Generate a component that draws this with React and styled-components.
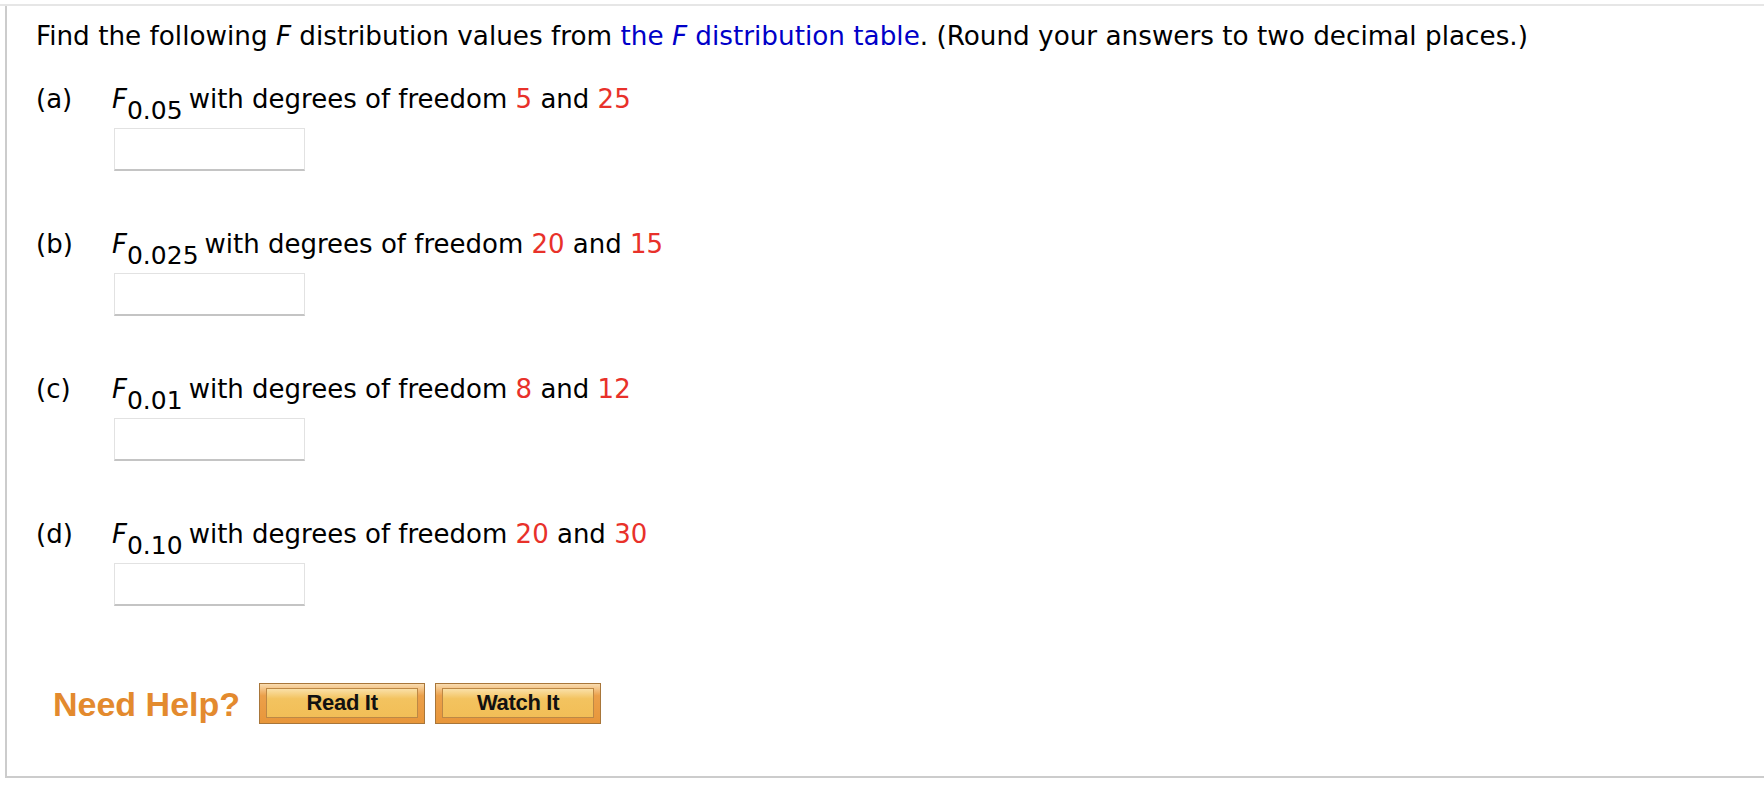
import React from 'react'
import styled, { createGlobalStyle } from 'styled-components'

const GlobalStyle = createGlobalStyle`
    html, body {
        margin: 0;
        padding: 0;
        background: #fff;
    }
    body {
        font-family: "DejaVu Sans", Verdana, sans-serif;
        color: #000;
    }
`

const Page = styled.div`
    padding-top: 4px;
`

const TopRule = styled.div`
    border-top: 2px solid #e6e6e6;
`

const Panel = styled.div`
    margin-left: 5px;
    height: 772px;
    box-sizing: border-box;
    border-left: 2px solid #cccccc;
    border-bottom: 2px solid #cccccc;
    padding: 15px 0 0 29px;
    font-size: 26px;
    line-height: 30px;
`

const Title = styled.div`
    margin-bottom: 33px;
    font-size: 26.25px;
`

const TableLink = styled.a`
    color: #0000c8;
    text-decoration: none;
`

const Item = styled.div`
    margin-bottom: 58px;
`

const Line = styled.div`
    display: flex;
    align-items: baseline;
`

const Label = styled.span`
    width: 76px;
    flex: none;
`

const Sub = styled.sub`
    font-size: 25px;
    line-height: 0;
    vertical-align: -11px;
    margin-left: 0;
    margin-right: 6px;
`

const Given = styled.span`
    color: #e8312a;
`

const AnswerBox = styled.input`
    display: block;
    margin: 14px 0 0 78px;
    width: 191px;
    height: 43px;
    box-sizing: border-box;
    border: 1px solid #e2e2e2;
    border-bottom: 2px solid #c4c4c4;
    background: #fff;
    outline: none;
`

const HelpRow = styled.div`
    display: flex;
    align-items: center;
    margin-top: 77px;
    padding-left: 17px;
`

const HelpText = styled.span`
    font-family: "Liberation Sans", Arial, sans-serif;
    font-weight: 700;
    font-size: 34px;
    color: #e38a2e;
    margin-right: 19px;
`

const HelpButton = styled.button`
    display: flex;
    width: 166px;
    height: 41px;
    box-sizing: border-box;
    margin: 0 10px 0 0;
    padding: 4px 6px 5px;
    border: 1px solid #a8763a;
    background: linear-gradient(#f9dcb0 0, #eba04a 30%, #e8963a 100%);
    cursor: pointer;
`

const HelpFace = styled.span`
    flex: 1;
    display: flex;
    align-items: center;
    justify-content: center;
    border: 1px solid #bd8845;
    background: linear-gradient(#fae0a8 0, #f3c35f 35%, #f2be57 100%);
    font-family: "Liberation Sans", Arial, sans-serif;
    font-weight: 700;
    font-size: 22px;
    letter-spacing: -0.3px;
    color: #111;
`

const items = [
    { key: 'a', level: '0.05', df1: '5', df2: '25' },
    { key: 'b', level: '0.025', df1: '20', df2: '15' },
    { key: 'c', level: '0.01', df1: '8', df2: '12' },
    { key: 'd', level: '0.10', df1: '20', df2: '30' },
]

export default function App() {
    return (
        <Page>
            <GlobalStyle/>
            <TopRule>
                <Panel>
                    <Title>
                        Find the following <i>F</i> distribution values from{' '}
                        <TableLink href="#">the <i>F</i> distribution table</TableLink>.
                        (Round your answers to two decimal places.)
                    </Title>
                    {items.map(it => (
                        <Item key={it.key}>
                            <Line>
                                <Label>({it.key})</Label>
                                <span>
                                    <i>F</i><Sub>{it.level}</Sub>
                                    with degrees of freedom <Given>{it.df1}</Given> and <Given>{it.df2}</Given>
                                </span>
                            </Line>
                            <AnswerBox type="text"/>
                        </Item>
                    ))}
                    <HelpRow>
                        <HelpText>Need Help?</HelpText>
                        <HelpButton><HelpFace>Read It</HelpFace></HelpButton>
                        <HelpButton><HelpFace>Watch It</HelpFace></HelpButton>
                    </HelpRow>
                </Panel>
            </TopRule>
        </Page>
    )
}
